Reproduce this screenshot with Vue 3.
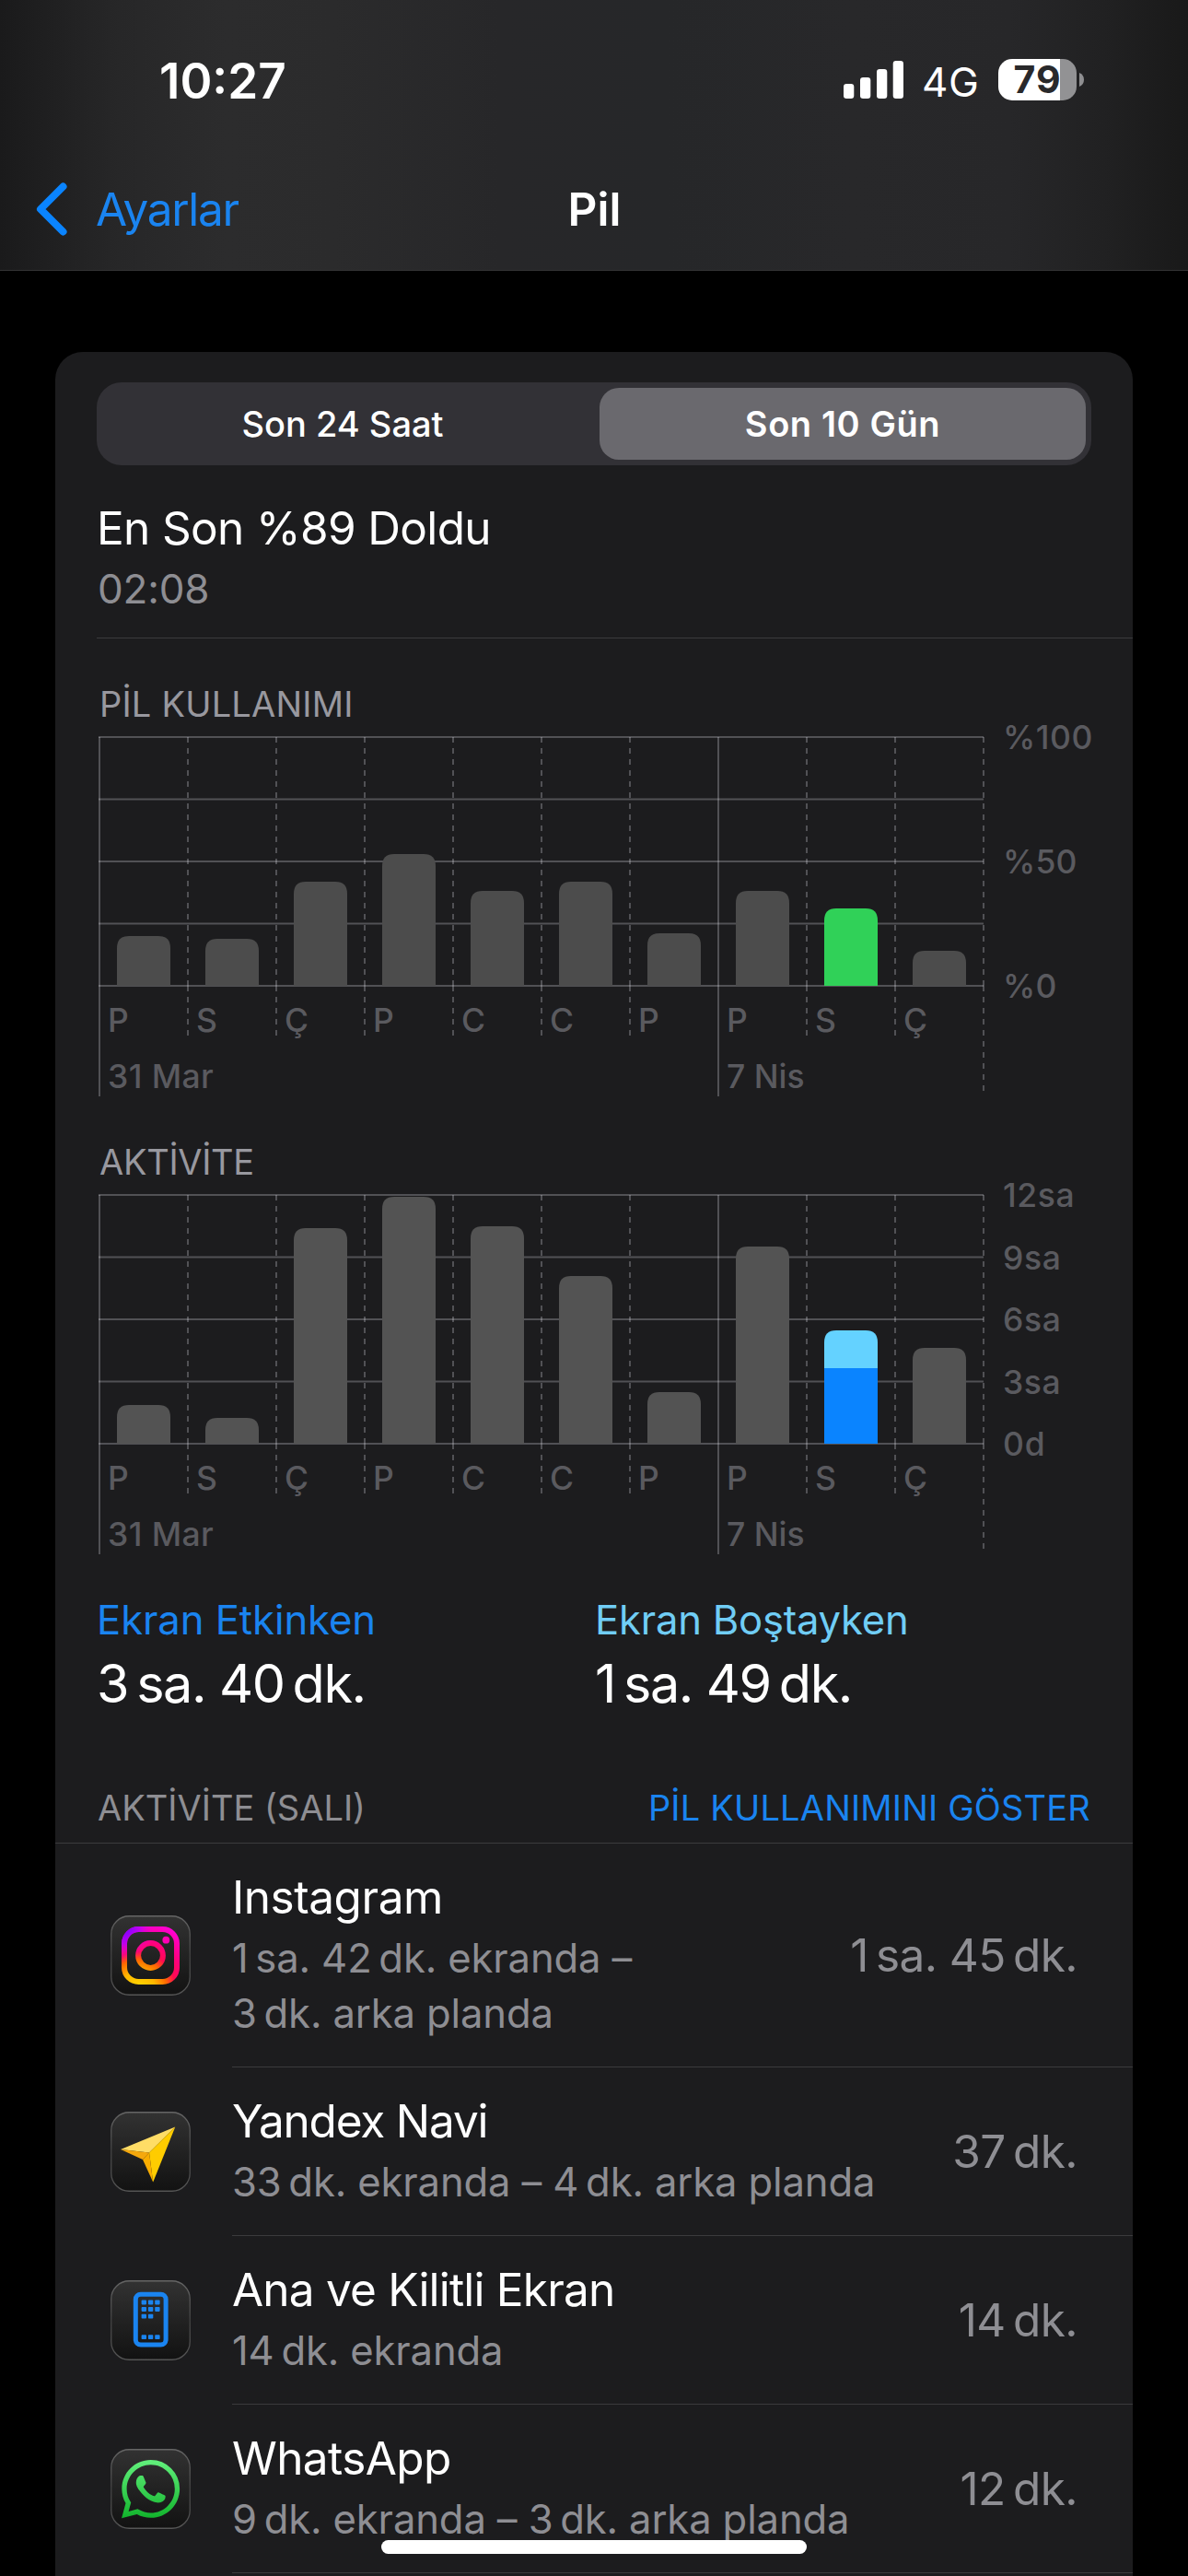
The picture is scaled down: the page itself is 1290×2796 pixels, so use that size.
<script setup>
const THIN = '\u2009'

// Plot geometry shared by both charts
const TOP = 13
const BOTTOM = 283
const LEFT = 3
const STEP = 96
const BAR = 58
const RIGHT = LEFT + STEP * 10
const days = ['P', 'S', 'Ç', 'P', 'C', 'C', 'P', 'P', 'S', 'Ç']
const weeks = [
  { at: 0, text: '31 Mar', tracking: 0.4 },
  { at: 7, text: '7 Nis', tracking: 0 },
]

const charts = [
  {
    title: 'PİL KULLANIMI',
    tracking: 0.2,
    fill: '#4c4c4c',
    bars: [54, 51, 113, 143, 103, 113, 57, 103, 84, 38],
    active: { index: 8, color: '#30d158' },
    scale: [
      { at: 0, text: '%100', tracking: 0.5 },
      { at: 0.5, text: '%50', tracking: 0.2 },
      { at: 1, text: '%0', tracking: 0.2 },
    ],
  },
  {
    title: 'AKTİVİTE',
    tracking: -0.3,
    fill: '#535353',
    bars: [42, 28, 234, 268, 236, 182, 56, 214, 123, 104],
    active: { index: 8, color: '#64d2ff', base: 82, baseColor: '#0a84ff' },
    scale: [
      { at: 0, text: '12sa', tracking: 0.6 },
      { at: 0.25, text: '9sa', tracking: 0.6 },
      { at: 0.5, text: '6sa', tracking: 0.6 },
      { at: 0.75, text: '3sa', tracking: 0.6 },
      { at: 1, text: '0d', tracking: 0.8 },
    ],
  },
]

const barX = (i) => LEFT + STEP * i + 19
const lineY = (f) => TOP + (BOTTOM - TOP) * f

function barPath(i, h) {
  const x = barX(i)
  const y = BOTTOM - h
  return `M${x} ${BOTTOM}V${y + 13}Q${x} ${y} ${x + 13} ${y}H${x + BAR - 13}Q${x + BAR} ${y} ${x + BAR} ${y + 13}V${BOTTOM}Z`
}

const barColor = (chart, i) => (i === chart.active.index ? chart.active.color : chart.fill)
const isWeekStart = (i) => i === 0 || i === 7
const tickEnd = (i) => (isWeekStart(i) ? 403 : i === 10 ? 397 : 337)

const stats = [
  { label: 'Ekran Etkinken', value: `3${THIN}sa. 40${THIN}dk.`, kind: 'on', tracking: -0.06 },
  { label: 'Ekran Boştayken', value: `1${THIN}sa. 49${THIN}dk.`, kind: 'idle', tracking: -0.22 },
]

const apps = [
  {
    id: 'instagram', name: 'Instagram', tracking: -0.46,
    lines: [`1${THIN}sa. 42${THIN}dk. ekranda –`, `3${THIN}dk. arka planda`], time: `1${THIN}sa. 45${THIN}dk.`,
  },
  {
    id: 'navi', name: 'Yandex Navi', tracking: -1.18,
    lines: [`33${THIN}dk. ekranda – 4${THIN}dk. arka planda`], time: `37${THIN}dk.`,
  },
  { id: 'home', name: 'Ana ve Kilitli Ekran', tracking: -0.8, lines: [`14${THIN}dk. ekranda`], time: `14${THIN}dk.` },
  {
    id: 'whatsapp', name: 'WhatsApp', tracking: -0.59,
    lines: [`9${THIN}dk. ekranda – 3${THIN}dk. arka planda`], time: `12${THIN}dk.`,
  },
]

// Squares of the small home screen: [column, row offset]
const dots = [
  [0, 0], [1, 0], [2, 0],
  [0, 7.5], [1, 7.5], [2, 7.5],
  [0, 15.2], [1, 15.2],
  [0, 37.6], [1, 37.6], [2, 37.6],
]
</script>

<template>
  <div class="screen">
    <header class="header">
      <div class="status">
        <span class="clock">10:27</span>
        <div class="indicators">
          <svg class="signal" width="65" height="41" viewBox="0 0 65 41" fill="#fff">
            <rect x="0" y="25" width="11.3" height="16" rx="3.2" />
            <rect x="18" y="18" width="11.3" height="23" rx="3.2" />
            <rect x="36" y="9" width="11.3" height="32" rx="3.2" />
            <rect x="53.7" y="0" width="11.3" height="41" rx="3.2" />
          </svg>
          <span class="network">4G</span>
          <div class="battery">
            <div class="battery-body"><span class="battery-text">79</span></div>
            <svg width="5" height="15" viewBox="0 0 5 15"><path d="M0 0Q5 2 5 7.5T0 15Z" fill="#8f8f91" /></svg>
          </div>
        </div>
      </div>
      <nav class="nav">
        <a class="back">
          <svg width="34" height="58" viewBox="0 0 34 58" fill="none" stroke="#0a84ff" stroke-width="8" stroke-linecap="round" stroke-linejoin="round">
            <path d="M29.5 4.5L5 29L29.5 53.5" />
          </svg>
          <span>Ayarlar</span>
        </a>
        <h1>Pil</h1>
        <span></span>
      </nav>
    </header>

    <main class="card">
      <div class="segments">
        <button class="segment">Son 24 Saat</button>
        <button class="segment selected">Son 10 Gün</button>
      </div>

      <section class="charge">
        <p class="charge-title">En Son %89 Doldu</p>
        <p class="charge-time">02:08</p>
      </section>

      <section v-for="chart in charts" :key="chart.title" class="chart">
        <h2 :style="{ letterSpacing: chart.tracking + 'px' }">{{ chart.title }}</h2>
        <svg width="1125" height="444" viewBox="0 0 1125 444">
          <g class="grid">
            <line v-for="n in 5" :key="'h' + n" :x1="LEFT - 1" :x2="RIGHT" :y1="lineY((n - 1) / 4)" :y2="lineY((n - 1) / 4)" />
            <path
              v-for="n in 11" :key="'v' + n"
              :class="{ dashed: !isWeekStart(n - 1) }"
              :d="`M${LEFT + STEP * (n - 1)} ${TOP}V${BOTTOM}M${LEFT + STEP * (n - 1)} ${BOTTOM}V${tickEnd(n - 1)}`"
            />
          </g>
          <path v-for="(h, i) in chart.bars" :key="'b' + i" :d="barPath(i, h)" :fill="barColor(chart, i)" />
          <rect
            v-if="chart.active.base"
            :x="barX(chart.active.index)" :y="BOTTOM - chart.active.base"
            :width="BAR" :height="chart.active.base" :fill="chart.active.baseColor"
          />
          <g class="labels">
            <text v-for="(d, i) in days" :key="'d' + i" :x="LEFT + STEP * i + 9" y="332.5">{{ d }}</text>
            <text v-for="w in weeks" :key="w.text" :x="LEFT + STEP * w.at + 9" y="394" :letter-spacing="w.tracking">{{ w.text }}</text>
            <text v-for="s in chart.scale" :key="s.text" x="984" :y="lineY(s.at) + 13" :letter-spacing="s.tracking">{{ s.text }}</text>
          </g>
        </svg>
      </section>

      <section class="stats">
        <div v-for="s in stats" :key="s.label" class="stat">
          <p class="stat-label" :class="s.kind" :style="{ letterSpacing: s.tracking + 'px' }">{{ s.label }}</p>
          <p class="stat-value">{{ s.value }}</p>
        </div>
      </section>

      <div class="list-header">
        <span>AKTİVİTE (SALI)</span>
        <a>PİL KULLANIMINI GÖSTER</a>
      </div>

      <ul class="apps">
        <li v-for="app in apps" :key="app.id" class="app">
          <svg class="app-icon" width="87" height="87" viewBox="0 0 87 87">
            <defs>
              <linearGradient id="tile" x1="0" y1="0" x2="0" y2="1">
                <stop offset="0" stop-color="#323232" /><stop offset="1" stop-color="#121212" />
              </linearGradient>
              <linearGradient id="tile-edge" x1="0" y1="0" x2="0" y2="1">
                <stop offset="0" stop-color="#656565" /><stop offset="0.5" stop-color="#424242" /><stop offset="1" stop-color="#555" />
              </linearGradient>
              <radialGradient id="insta" gradientUnits="userSpaceOnUse" cx="30" cy="80" r="78">
                <stop offset="0.08" stop-color="#ffd000" /><stop offset="0.24" stop-color="#ffb800" />
                <stop offset="0.4" stop-color="#ff6a00" /><stop offset="0.52" stop-color="#ff0a50" />
                <stop offset="0.68" stop-color="#ff0080" /><stop offset="0.95" stop-color="#ff00d4" />
              </radialGradient>
              <radialGradient id="insta-violet" gradientUnits="userSpaceOnUse" cx="12" cy="12" r="38">
                <stop offset="0.15" stop-color="#7a00ff" /><stop offset="0.5" stop-color="#b400ff" stop-opacity="0.85" />
                <stop offset="1" stop-color="#ff00d4" stop-opacity="0" />
              </radialGradient>
              <linearGradient id="wa" x1="0" y1="0" x2="0" y2="1">
                <stop offset="0" stop-color="#62f07c" /><stop offset="1" stop-color="#12b32c" />
              </linearGradient>
            </defs>
            <rect x="0.75" y="0.75" width="85.5" height="85.5" rx="19.5" fill="url(#tile)" stroke="url(#tile-edge)" stroke-width="1.3" />

            <g v-if="app.id === 'instagram'">
              <g v-for="paint in ['insta', 'insta-violet']" :key="paint" fill="none" :stroke="`url(#${paint})`" stroke-width="6">
                <rect x="15" y="15" width="57" height="57" rx="15.5" />
                <circle cx="43.5" cy="43.5" r="13.4" />
              </g>
              <circle cx="60.3" cy="26.7" r="3.9" fill="#ff00b4" />
            </g>

            <g v-else-if="app.id === 'navi'">
              <path d="M70.3 16.5L11 41L42 44.5Z" fill="#ffdd66" />
              <path d="M70.3 16.5L42 44.5L46.2 76.5Z" fill="#ffcc00" />
              <path d="M11 41L42 44.5L35 52Z" fill="#f5a80c" />
              <path d="M42 44.5L35 52L46.2 76.5Z" fill="#f9ad00" />
            </g>

            <g v-else-if="app.id === 'home'">
              <rect x="27.3" y="15.2" width="32.8" height="54.8" rx="5.5" fill="none" stroke="#1a84f0" stroke-width="5" />
              <rect v-for="(d, i) in dots" :key="i" :x="33.6 + d[0] * 7.3" :y="21.6 + d[1]" width="5.4" height="4.8" rx="0.8" fill="#1a84f0" />
            </g>

            <g v-else transform="translate(11.9 12) scale(2.64)" fill="url(#wa)">
              <path d="M17.472 14.382c-.297-.149-1.758-.867-2.03-.967-.273-.099-.471-.148-.67.15-.197.297-.767.966-.94 1.164-.173.199-.347.223-.644.075-.297-.15-1.255-.463-2.39-1.475-.883-.788-1.48-1.761-1.653-2.059-.173-.297-.018-.458.13-.606.134-.133.298-.347.446-.52.149-.174.198-.298.298-.497.099-.198.05-.371-.025-.52-.075-.149-.669-1.612-.916-2.207-.242-.579-.487-.5-.669-.51-.173-.008-.371-.01-.57-.01-.198 0-.52.074-.792.372-.272.297-1.04 1.016-1.04 2.479 0 1.462 1.065 2.875 1.213 3.074.149.198 2.096 3.2 5.077 4.487.709.306 1.262.489 1.694.625.712.227 1.36.195 1.871.118.571-.085 1.758-.719 2.006-1.413.248-.694.248-1.289.173-1.413-.074-.124-.272-.198-.57-.347m-5.421 7.403h-.004a9.87 9.87 0 01-5.031-1.378l-.361-.214-3.741.982.998-3.648-.235-.374a9.86 9.86 0 01-1.51-5.26c.001-5.45 4.436-9.884 9.888-9.884 2.64 0 5.122 1.03 6.988 2.898a9.825 9.825 0 012.893 6.994c-.003 5.45-4.437 9.884-9.885 9.884m8.413-18.297A11.815 11.815 0 0012.05 0C5.495 0 .16 5.335.157 11.892c0 2.096.547 4.142 1.588 5.945L.057 24l6.305-1.654a11.882 11.882 0 005.683 1.448h.005c6.554 0 11.89-5.335 11.893-11.893a11.821 11.821 0 00-3.48-8.413Z" />
            </g>
          </svg>
          <div class="app-main">
            <div class="app-text">
              <p class="app-name" :style="{ letterSpacing: app.tracking + 'px' }">{{ app.name }}</p>
              <p v-for="line in app.lines" :key="line" class="app-detail">{{ line }}</p>
            </div>
            <span class="app-time">{{ app.time }}</span>
          </div>
        </li>
      </ul>
    </main>

    <div class="home-indicator"></div>
  </div>
</template>

<style>
html,
body {
  margin: 0;
  background: #000;
}
</style>

<style scoped>
.screen {
  position: relative;
  width: 1290px;
  height: 2796px;
  overflow: hidden;
  background: #000;
  color: #fff;
  font-family: Inter, 'Liberation Sans', sans-serif;
}
p, h1, h2, ul { margin: 0; padding: 0; }
svg { display: block; flex: none; overflow: visible; }

.header {
  box-sizing: border-box;
  height: 294px;
  border-bottom: 1px solid #323233;
  background: linear-gradient(90deg, #1a1a1b 0%, #1e1e1f 3%, #272728 10%, #2c2c2d 19%, #2b2b2c 28%, #272729 42%, #262729 56%, #28282a 72%, #272729 85%, #212122 93%, #191919 100%);
}
.status {
  box-sizing: border-box;
  display: flex;
  align-items: center;
  justify-content: space-between;
  height: 160px;
  padding: 15px 113px 0 173px;
}
.clock {
  font-size: 53px;
  font-weight: 600;
  line-height: 64px;
}
.indicators {
  display: flex;
  align-items: center;
  margin-top: -2px;
}
.network {
  width: 65px;
  margin: 4px 18px 0 20px;
  font-size: 44px;
  line-height: 54px;
  letter-spacing: 0.5px;
}
.battery {
  display: flex;
  align-items: center;
  gap: 3px;
}
.battery-body {
  display: flex;
  align-items: center;
  justify-content: center;
  width: 85px;
  height: 45px;
  border-radius: 15px;
  background: linear-gradient(90deg, #fff 67px, #929294 67px);
}
.battery-text {
  color: #29292b;
  font-size: 41px;
  font-weight: 700;
  line-height: 45px;
  letter-spacing: 1px;
}
.nav {
  display: grid;
  grid-template-columns: 1fr auto 1fr;
  align-items: center;
  height: 134px;
  padding: 0 39px;
}
.nav h1 {
  padding-left: 1px;
  font-size: 49.5px;
  font-weight: 600;
  line-height: 60px;
}
.back {
  display: flex;
  align-items: center;
  gap: 31px;
  color: #1a84f0;
  font-size: 49.5px;
  line-height: 60px;
  letter-spacing: -1.31px;
}

.card {
  display: flow-root;
  width: 1170px;
  margin: 88px 60px 0;
  padding: 33px 0 20px;
  border-radius: 30px 30px 0 0;
  background: #1c1c1e;
}
.segments {
  box-sizing: border-box;
  display: flex;
  width: 1080px;
  height: 90px;
  margin: 0 45px;
  padding: 6px 6px 6px 0;
  border-radius: 27px;
  background: #323136;
}
.segment {
  flex: 0 0 540px;
  padding: 0 6px 0 0;
  border: 0;
  background: none;
  color: #fff;
  font-family: inherit;
  font-size: 38px;
  font-weight: 500;
  line-height: 78px;
}
.segment.selected {
  flex: 0 0 528px;
  margin-left: 6px;
  padding: 0;
  border-radius: 21px;
  background: #6a696e;
  font-weight: 600;
  letter-spacing: 0.6px;
}

.charge {
  margin: 38px 0 0 45px;
  padding-bottom: 25px;
  border-bottom: 1px solid #3b3b3d;
}
.charge-title {
  font-size: 49.5px;
  line-height: 60px;
  letter-spacing: -0.65px;
}
.charge-time {
  margin-top: 8px;
  padding-left: 1px;
  color: #8e8e93;
  font-size: 44px;
  line-height: 56px;
  letter-spacing: -0.2px;
}

.chart {
  margin: 7px 0 0 45px;
}
.charge + .chart {
  margin-top: 48px;
}
.chart h2 {
  padding-left: 3px;
  color: #98989f;
  font-size: 38px;
  font-weight: 400;
  line-height: 46px;
}
.grid line,
.grid path {
  fill: none;
  stroke: rgba(235, 235, 245, 0.26);
  stroke-width: 2;
}
.grid .dashed {
  stroke-dasharray: 6 6;
}
.labels text {
  fill: #5a5a5f;
  font-size: 35.5px;
  font-weight: 500;
}

.stats {
  display: grid;
  grid-template-columns: 541px 1fr;
  margin: 4px 0 0 45px;
}
.stat-label {
  font-size: 43.6px;
  line-height: 54px;
}
.stat-label.on { color: #1a84f0; }
.stat-label.idle { color: #70cdf5; }
.stat-value {
  margin-top: 6px;
  font-size: 57.5px;
  line-height: 70px;
  letter-spacing: -1.4px;
}

.list-header {
  display: flex;
  justify-content: space-between;
  margin-top: 77px;
  padding: 0 46px 15px 46px;
  border-bottom: 1px solid #3b3b3d;
  color: #8e8e93;
  font-size: 38px;
  line-height: 46px;
}
.list-header a {
  color: #1a84f0;
  letter-spacing: 0.18px;
}

.apps { list-style: none; }
.app {
  display: flex;
  align-items: center;
  gap: 45px;
  height: 183px;
  padding-left: 60px;
}
.app:first-child { height: 243px; }
.app-main {
  box-sizing: border-box;
  display: flex;
  flex: 1;
  align-items: center;
  justify-content: space-between;
  align-self: stretch;
  padding-right: 60px;
  border-bottom: 1px solid #3b3b3d;
}
.app-text {
  padding-top: 1px;
}
.app-name {
  margin-bottom: 7px;
  font-size: 49.5px;
  line-height: 60px;
}
.app-detail {
  color: #8e8e93;
  font-size: 43.6px;
  line-height: 60px;
  letter-spacing: -0.14px;
  white-space: nowrap;
}
.app-time {
  color: #8e8e93;
  font-size: 49.5px;
  line-height: 60px;
  letter-spacing: -0.6px;
  white-space: nowrap;
}

.home-indicator {
  position: absolute;
  left: 414px;
  bottom: 24px;
  width: 462px;
  height: 15px;
  border-radius: 8px;
  background: #fff;
}
</style>
